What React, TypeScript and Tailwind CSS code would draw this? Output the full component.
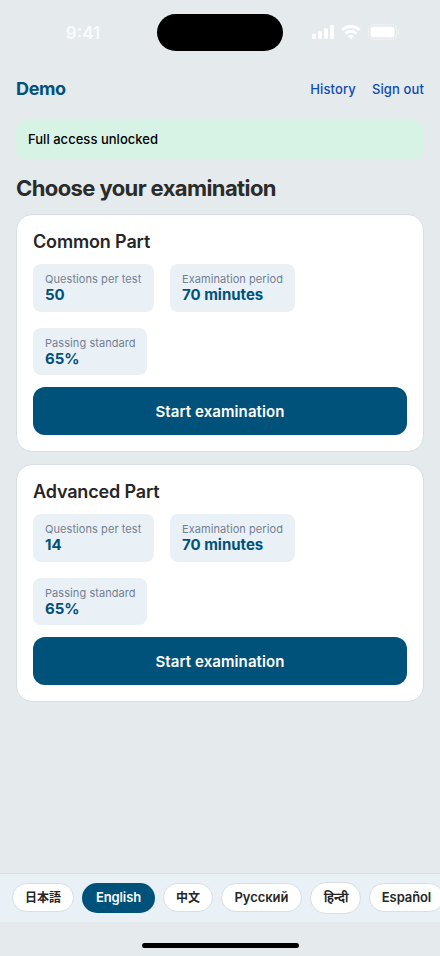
interface Exam {
  title: string;
  questions: string;
  period: string;
  standard: string;
}

const exams: Exam[] = [
  { title: "Common Part", questions: "50", period: "70 minutes", standard: "65%" },
  { title: "Advanced Part", questions: "14", period: "70 minutes", standard: "65%" },
];

const languages = [
  { label: "日本語", className: "h-[29px] w-[62px] text-[12px] font-bold" },
  { label: "English", className: "h-[30px] w-[73px] text-[13px] font-semibold tracking-[-0.1px]" },
  { label: "中文", className: "h-[29px] w-[50px] text-[12px] font-bold" },
  { label: "Русский", className: "h-[29px] w-[81px] text-[13px] font-semibold tracking-[-0.05px]" },
  { label: "हिन्दी", className: "h-[32px] w-[51px] text-[13px] font-semibold" },
  { label: "Español", className: "h-[29px] w-[75px] text-[13px] font-semibold tracking-[-0.1px]" },
];

function StatusBar() {
  return (
    <div className="flex h-[62px] items-start justify-between pt-3.5">
      <span className="w-[157px] pl-[9px] pt-[6.5px] text-center text-[17px] leading-6 font-semibold text-white/80">
        9:41
      </span>
      <div className="h-[37px] w-[126px] rounded-full bg-black" />
      <div className="flex w-[157px] items-center gap-[7px] pl-[29px] pt-[10px] text-white">
        <svg width="22" height="16" viewBox="0 0 22 16" fill="currentColor">
          <rect x="0" y="9.8" width="4" height="5.2" rx="1.2" />
          <rect x="6" y="7.3" width="4" height="7.7" rx="1.2" />
          <rect x="12" y="4.3" width="4" height="10.7" rx="1.2" />
          <rect x="18" y="1" width="4" height="14" rx="1.2" />
        </svg>
        <svg width="20" height="16" viewBox="0 0 20 16" fill="none" stroke="currentColor" strokeWidth="2.8">
          <path d="M1.2 6.1a12.6 12.6 0 0 1 17.6 0" />
          <path d="M4.5 9.5a7.9 7.9 0 0 1 11 0" />
          <path d="M10 15.2l-3-3.1a4.4 4.4 0 0 1 6 0z" fill="currentColor" stroke="none" />
        </svg>
        <svg width="32" height="16" viewBox="0 0 32 16" fill="currentColor">
          <rect x="0.5" y="0.8" width="28" height="14.4" rx="4.6" fill="none" stroke="currentColor" strokeOpacity="0.4" />
          <rect x="2.5" y="2.8" width="24" height="10.4" rx="2.8" />
          <path d="M30 6v4.4c1.6-.7 1.6-3.7 0-4.4z" fillOpacity="0.5" />
        </svg>
      </div>
    </div>
  );
}

function Stat({ label, value, className }: { label: string; value: string; className: string }) {
  return (
    <div className={`flex h-[47.5px] flex-col rounded-lg bg-[#e9f1f7] pl-3 pt-2 whitespace-nowrap ${className}`}>
      <span className="text-[11px] leading-[14px] tracking-[0.07px] text-[#748090]">{label}</span>
      <span className="text-[15px] leading-[18px] font-bold text-[#00527a]">{value}</span>
    </div>
  );
}

function ExamCard({ exam }: { exam: Exam }) {
  return (
    <section className="h-[238px] rounded-2xl border border-[#d5dfe5] bg-white px-4 pt-4">
      <h2 className="text-[18px] leading-[22px] font-semibold tracking-[-0.15px] text-[#262626]">{exam.title}</h2>
      <div className="mt-[11.5px] flex flex-wrap gap-4">
        <Stat label="Questions per test" value={exam.questions} className="w-[121px]" />
        <Stat label="Examination period" value={exam.period} className="w-[124.5px]" />
        <Stat label="Passing standard" value={exam.standard} className="w-[114px]" />
      </div>
      <button
        type="button"
        className="mt-3 h-12 w-full rounded-xl bg-[#00527a] pt-0.5 text-[15px] font-semibold tracking-[0.09px] text-white"
      >
        Start examination
      </button>
    </section>
  );
}

export default function App() {
  return (
    <div className="flex h-[956px] w-[440px] flex-col overflow-hidden bg-[#e5eaed] font-['Inter','Noto_Sans_CJK_JP',sans-serif]">
      <StatusBar />
      <header className="flex h-[54px] items-center justify-between px-4">
        <h1 className="pb-px text-[18px] leading-6 font-bold tracking-[-0.35px] text-[#00527a]">Demo</h1>
        <nav className="flex gap-4 pt-px text-[13px] font-medium tracking-[0.12px] text-[#0d4cb0]">
          <a href="#history">History</a>
          <a href="#signout">Sign out</a>
        </nav>
      </header>
      <main className="flex flex-col px-4 pt-[3.5px]">
        <div className="flex h-10 items-center rounded-xl bg-[#d7f3e6] px-3 pt-px text-[13px] font-medium tracking-[0.03px] text-black">
          Full access unlocked
        </div>
        <h2 className="mt-[15px] mb-[13px] text-[22px] leading-[26px] font-bold tracking-[-0.6px] text-[#2b2b2b]">
          Choose your examination
        </h2>
        <div className="flex flex-col gap-3">
          {exams.map((exam) => (
            <ExamCard key={exam.title} exam={exam} />
          ))}
        </div>
      </main>
      <footer className="mt-auto shrink-0">
        <div className="flex h-[49px] items-center gap-2 overflow-hidden border-t border-[#d5dfe5] bg-[#e9f1f7] pb-px pl-3">
          {languages.map((language) => (
            <button
              key={language.label}
              type="button"
              className={`flex shrink-0 items-center justify-center rounded-full whitespace-nowrap ${
                language.label === "English"
                  ? "bg-[#00527a] text-white"
                  : "border border-[#d5dfe5] bg-white text-[#262626]"
              } ${language.className}`}
            >
              {language.label}
            </button>
          ))}
        </div>
        <div className="flex h-[34px] justify-center pt-[21px]">
          <div className="h-[5px] w-[157px] rounded-full bg-black" />
        </div>
      </footer>
    </div>
  );
}
